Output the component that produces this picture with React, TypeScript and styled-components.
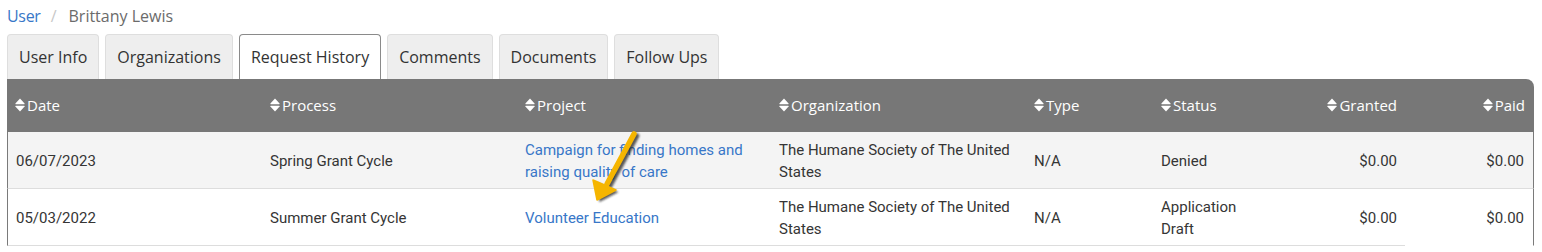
import React from "react";
import styled, { createGlobalStyle } from "styled-components";

const Global = createGlobalStyle`
  html, body { margin: 0; padding: 0; background: #fff; }
  body { font-family: "Open Sans", "Noto Sans", sans-serif; }
  * { box-sizing: border-box; }
`;

const Page = styled.div`
  position: relative;
  padding: 0 8px 0 7px;
  width: 1542px;
`;

const Crumbs = styled.nav`
  display: flex;
  align-items: center;
  height: 34px;
  font-family: "Open Sans", sans-serif;
  font-size: 16px;
  padding-bottom: 2px;
`;

const CrumbLink = styled.a`
  color: #3877c8;
  text-decoration: none;
  letter-spacing: -0.3px;
`;

const CrumbSep = styled.span`
  color: #c8c8c8;
  margin: 0 12px 0 10px;
`;

const CrumbCurrent = styled.span`
  color: #6b6b6b;
`;

const TabBar = styled.div`
  display: flex;
  gap: 6px;
  height: 45px;
`;

const Tab = styled.div<{ $active?: boolean }>`
  display: flex;
  align-items: center;
  padding: 0 11px;
  height: 45px;
  font-family: "Open Sans", sans-serif;
  font-size: 16px;
  color: #333;
  border: 1px solid ${(p) => (p.$active ? "#8a8a8a" : "#dedede")};
  border-bottom: none;
  border-radius: 4px 4px 0 0;
  background: ${(p) => (p.$active ? "#fff" : "#eeeeee")};
`;

const Table = styled.div`
  display: grid;
  grid-template-columns: 255px 255px 254px 255px 127px 127px 125px 129px;
  width: 1527px;
`;

const HeadCell = styled.div<{ $right?: boolean; $last?: boolean }>`
  background: #777777;
  height: 53px;
  display: flex;
  align-items: center;
  justify-content: ${(p) => (p.$right ? "flex-end" : "flex-start")};
  padding: 0 ${(p) => (p.$last ? "9px" : "8px")} 2px 8px;
  font-family: "Open Sans", sans-serif;
  font-size: 15px;
  font-weight: 500;
  color: #fff;
  border-top-right-radius: ${(p) => (p.$last ? "8px" : "0")};
  gap: 2px;
`;

const Cell = styled.div<{
  $right?: boolean;
  $alt?: boolean;
  $first?: boolean;
  $last?: boolean;
  $noBottom?: boolean;
}>`
  display: flex;
  align-items: center;
  justify-content: ${(p) => (p.$right ? "flex-end" : "flex-start")};
  text-align: ${(p) => (p.$right ? "right" : "left")};
  min-height: 57px;
  padding: 6px ${(p) => (p.$last ? "9px" : "8px")} 4px 8px;
  font-family: Roboto, "Liberation Sans", sans-serif;
  font-size: 15px;
  line-height: 22px;
  color: #353535;
  background: ${(p) => (p.$alt ? "#f4f4f4" : "#fff")};
  border-bottom: 1px solid ${(p) => (p.$noBottom ? "transparent" : "#dddddd")};
  border-left: ${(p) => (p.$first ? "1px solid #7a7a7a" : "none")};
  border-right: ${(p) => (p.$last ? "1px solid #7a7a7a" : "none")};
`;

const RowLink = styled.a`
  color: #3877c8;
  text-decoration: none;
`;

const Overlay = styled.svg`
  position: absolute;
  left: 0;
  top: 0;
  pointer-events: none;
`;

const SortIcon = () => (
  <svg width="10" height="14" viewBox="0 0 10 14" aria-hidden>
    <path d="M5 0.5 L9.6 5.6 Q9.8 6.2 9.2 6.3 L0.8 6.3 Q0.2 6.2 0.4 5.6 Z" fill="#fff" />
    <path d="M5 13.5 L9.6 8.4 Q9.8 7.8 9.2 7.7 L0.8 7.7 Q0.2 7.8 0.4 8.4 Z" fill="#fff" />
  </svg>
);

type Row = {
  date: string;
  process: string;
  project: string;
  org: string;
  type: string;
  status: string;
  granted: string;
  paid: string;
};

const rows: Row[] = [
  {
    date: "06/07/2023",
    process: "Spring Grant Cycle",
    project: "Campaign for finding homes and raising quality of care",
    org: "The Humane Society of The United States",
    type: "N/A",
    status: "Denied",
    granted: "$0.00",
    paid: "$0.00",
  },
  {
    date: "05/03/2022",
    process: "Summer Grant Cycle",
    project: "Volunteer Education",
    org: "The Humane Society of The United States",
    type: "N/A",
    status: "Application Draft",
    granted: "$0.00",
    paid: "$0.00",
  },
];

const headers: { label: string; right?: boolean }[] = [
  { label: "Date" },
  { label: "Process" },
  { label: "Project" },
  { label: "Organization" },
  { label: "Type" },
  { label: "Status" },
  { label: "Granted", right: true },
  { label: "Paid", right: true },
];

const tabs = ["User Info", "Organizations", "Request History", "Comments", "Documents", "Follow Ups"];

export default function App() {
  return (
    <Page>
      <Global />
      <Crumbs>
        <CrumbLink href="#">User</CrumbLink>
        <CrumbSep>/</CrumbSep>
        <CrumbCurrent>Brittany Lewis</CrumbCurrent>
      </Crumbs>
      <TabBar>
        {tabs.map((t) => (
          <Tab key={t} $active={t === "Request History"}>
            {t}
          </Tab>
        ))}
      </TabBar>
      <Table>
        {headers.map((h, i) => (
          <HeadCell key={h.label} $right={h.right} $last={i === headers.length - 1}>
            <SortIcon />
            {h.label}
          </HeadCell>
        ))}
        {rows.map((r, ri) => {
          const alt = ri % 2 === 0;
          const lastRow = ri === rows.length - 1;
          return (
            <React.Fragment key={r.date}>
              <Cell $alt={alt} $first>{r.date}</Cell>
              <Cell $alt={alt}>{r.process}</Cell>
              <Cell $alt={alt}>
                <RowLink href="#">{r.project}</RowLink>
              </Cell>
              <Cell $alt={alt}>{r.org}</Cell>
              <Cell $alt={alt}>{r.type}</Cell>
              <Cell $alt={alt}>{r.status}</Cell>
              <Cell $alt={alt} $right>{r.granted}</Cell>
              <Cell $alt={alt} $right $last $noBottom={lastRow}>{r.paid}</Cell>
            </React.Fragment>
          );
        })}
      </Table>
      <Overlay width="1542" height="252" viewBox="0 0 1542 252">
        <defs>
          <filter id="sh" x="-50%" y="-50%" width="200%" height="200%">
            <feGaussianBlur stdDeviation="1.2" />
          </filter>
        </defs>
        <g transform="translate(2.5 2)" opacity="0.75" filter="url(#sh)">
          <line x1="634" y1="134" x2="607" y2="184" stroke="#222" strokeWidth="5.5" strokeLinecap="round" />
          <path d="M597 200 L593 180 L616 190 Z" fill="#222" />
        </g>
        <line x1="634" y1="134" x2="607" y2="184" stroke="#f5b500" strokeWidth="5.5" strokeLinecap="round" />
        <path d="M597 200 L593 180 L616 190 Z" fill="#f5b500" stroke="#f5b500" strokeWidth="1.5" strokeLinejoin="round" />
      </Overlay>
    </Page>
  );
}
